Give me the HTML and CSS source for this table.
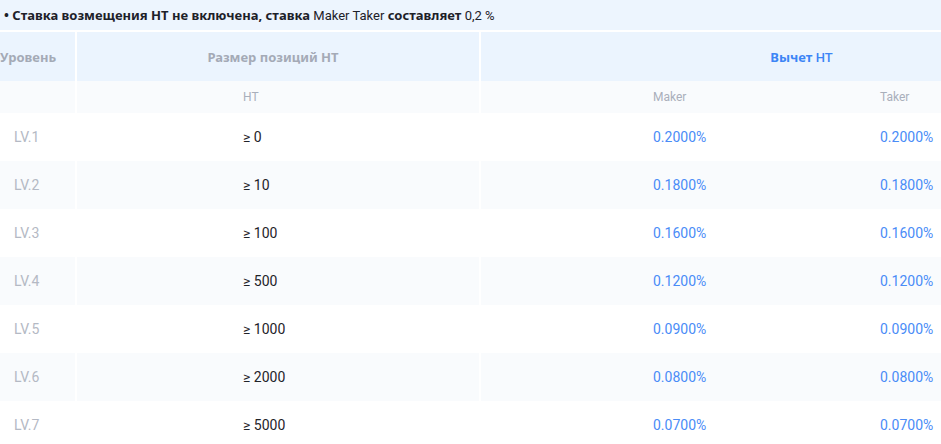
FILE: index.html
```html
<!DOCTYPE html>
<html lang="ru">
<head>
<meta charset="utf-8">
<link rel="stylesheet" href="styles.css">
</head>
<body>
<div class="note">• Ставка возмещения НТ не включена, ставка <span class="lat">Maker Taker</span> составляет <span class="lat">0,2 %</span></div>
<div class="table">
  <div class="row head">
    <div class="cell c1">Уровень</div>
    <div class="cell c2">Размер позиций НТ</div>
    <div class="cell c3 blue"><span>Вычет <span class="lat">HT</span></span></div>
  </div>
  <div class="row sub">
    <div class="cell c1"></div>
    <div class="cell c2"><span class="lat">HT</span></div>
    <div class="cell c3 pair"><span class="mk">Maker</span><span class="tk">Taker</span></div>
  </div>
  <div class="row data">
    <div class="cell c1">LV.1</div>
    <div class="cell c2">≥ 0</div>
    <div class="cell c3 pair"><span class="mk">0.2000%</span><span class="tk">0.2000%</span></div>
  </div>
  <div class="row data">
    <div class="cell c1">LV.2</div>
    <div class="cell c2">≥ 10</div>
    <div class="cell c3 pair"><span class="mk">0.1800%</span><span class="tk">0.1800%</span></div>
  </div>
  <div class="row data">
    <div class="cell c1">LV.3</div>
    <div class="cell c2">≥ 100</div>
    <div class="cell c3 pair"><span class="mk">0.1600%</span><span class="tk">0.1600%</span></div>
  </div>
  <div class="row data">
    <div class="cell c1">LV.4</div>
    <div class="cell c2">≥ 500</div>
    <div class="cell c3 pair"><span class="mk">0.1200%</span><span class="tk">0.1200%</span></div>
  </div>
  <div class="row data">
    <div class="cell c1">LV.5</div>
    <div class="cell c2">≥ 1000</div>
    <div class="cell c3 pair"><span class="mk">0.0900%</span><span class="tk">0.0900%</span></div>
  </div>
  <div class="row data">
    <div class="cell c1">LV.6</div>
    <div class="cell c2">≥ 2000</div>
    <div class="cell c3 pair"><span class="mk">0.0800%</span><span class="tk">0.0800%</span></div>
  </div>
  <div class="row data">
    <div class="cell c1">LV.7</div>
    <div class="cell c2">≥ 5000</div>
    <div class="cell c3 pair"><span class="mk">0.0700%</span><span class="tk">0.0700%</span></div>
  </div>
</div>
</body>
</html>
```
FILE: styles.css
```css
html, body {
  margin: 0;
  padding: 0;
  background: #ffffff;
  overflow: hidden;
}
body {
  font-family: "Noto Sans", Roboto, sans-serif;
  width: 941px;
  height: 444px;
}
.lat { font-family: Roboto, "Noto Sans", sans-serif; font-weight: 400; }
.note {
  height: 30px;
  line-height: 30px;
  background: #edf5fe;
  padding-left: 4px;
  font-size: 13px;
  font-weight: 700;
  color: #1d2129;
  white-space: nowrap;
  margin-bottom: 2px;
}
.table { width: 941px; overflow: hidden; }
.row {
  display: grid;
  grid-template-columns: 75px 402px 1fr;
  column-gap: 2px;
}
.cell {
  display: flex;
  align-items: center;
  white-space: nowrap;
  overflow: hidden;
}
.head { height: 49px; }
.head .cell {
  background: #ebf4fe;
  justify-content: center;
  font-size: 13px;
  font-weight: 700;
  color: #a4aab6;
}
.head .c1 { justify-content: flex-start; }
.head .c2 { padding-right: 10px; }
.head .c3 { padding-left: 181px; }
.head .c3.blue { color: #3c85f6; }
.head .c3.blue .lat { font-weight: 500; }
.sub { height: 32px; }
.sub .cell {
  background: #f9fbfd;
  font-family: Roboto, sans-serif;
  font-size: 12px;
  color: #a9afbb;
}
.sub .c2, .data .c2 { padding-left: 166px; }
.pair { padding-left: 172px; }
.mk { width: 227px; flex-shrink: 0; }
.tk { flex-shrink: 0; }
.data { height: 48px; }
.data:nth-of-type(2n) .cell { background: #f9fbfd; }
.data .cell {
  font-family: Roboto, sans-serif;
  font-size: 14px;
}
.data .c1 { padding-left: 14px; color: #b4b9c4; }
.data .c2 { color: #1f2329; }
.data .c3 { color: #4a8cf7; }
```
